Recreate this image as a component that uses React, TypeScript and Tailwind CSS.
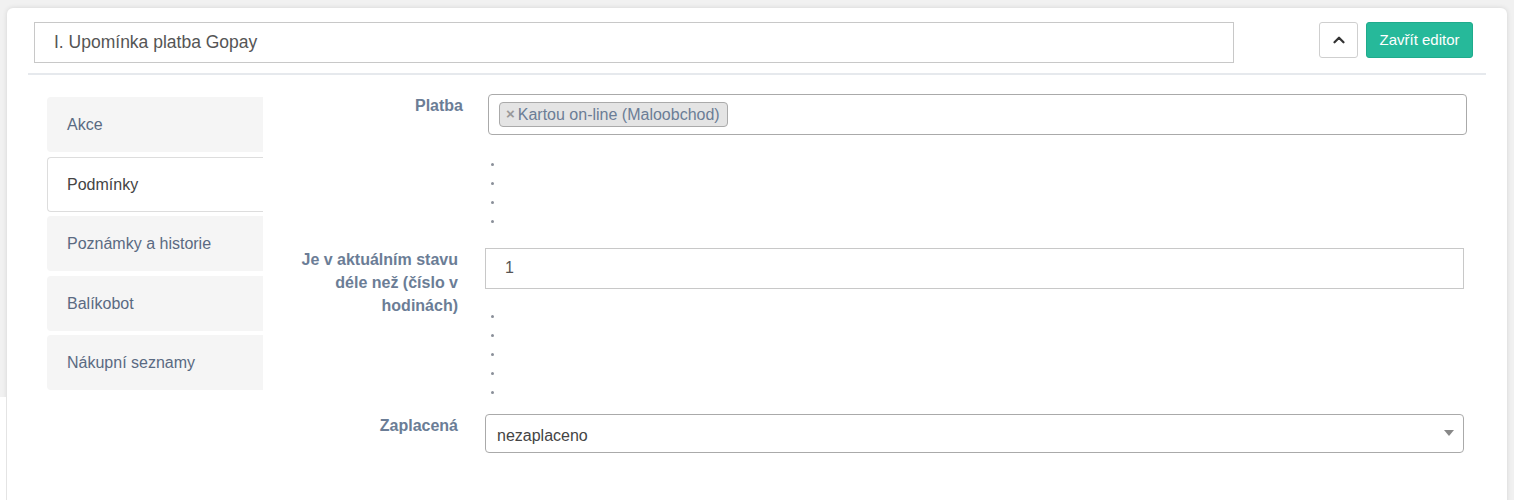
import React from "react";
import { ChevronUp } from "lucide-react";

const font = { fontFamily: '"Liberation Sans", Arial, sans-serif' };

function Dots({ n }: { n: number }) {
  return (
    <div className="flex flex-col">
      {Array.from({ length: n }).map((_, i) => (
        <div key={i} className="h-[19px] flex items-center">
          <span className="block w-[3px] h-[3px] rounded-full bg-[#8a8f99]" />
        </div>
      ))}
    </div>
  );
}

export default function App() {
  const tabs = ["Akce", "Podmínky", "Poznámky a historie", "Balíkobot", "Nákupní seznamy"];
  return (
    <div className="relative bg-[#f1f1f1] min-h-[500px] h-[500px] overflow-hidden pt-[8px] px-[7px]" style={font}>
      <div className="absolute left-0 top-[397px] w-[6px] h-[103px] bg-white" />
      <div className="bg-white rounded-[6px] shadow-[0_0_5px_rgba(0,0,0,0.12)] h-[520px]">
        {/* header */}
        <div className="flex items-start pt-[14px] pl-[27px] pr-[34px]">
          <div className="w-[1200px] h-[41px] border border-[#c8c8c8] flex items-center pl-[19px] text-[17.5px] text-[#555]">
            I. Upomínka platba Gopay
          </div>
          <div className="flex-1" />
          <button className="w-[39px] h-[36px] border border-[#cfcfcf] rounded-[3px] bg-white flex items-center justify-center text-[#333]">
            <ChevronUp size={18} strokeWidth={3} />
          </button>
          <button className="ml-[8px] w-[107px] h-[36px] rounded-[3px] bg-[#26b99a] border border-[#1fab8c] text-white text-[15px] flex items-center justify-center">
            Zavřít editor
          </button>
        </div>
        <div className="mx-[21px] mt-[10px] h-[2px] bg-[#e6e9ed]" />
        {/* body */}
        <div className="flex pl-[40px] pt-[22px]">
          <div className="w-[216px] flex flex-col gap-[4.5px]">
            {tabs.map((t) => {
              const active = t === "Podmínky";
              return (
                <div
                  key={t}
                  className={
                    active
                      ? "h-[55px] flex items-center pl-[19px] pt-[1px] text-[16px] text-[#444] bg-white border border-r-0 border-[#dddddd] rounded-l-[4px]"
                      : "h-[55px] flex items-center pl-[20px] pt-[1px] text-[16px] text-[#5a6a82] bg-[#f5f5f5] rounded-l-[4px]"
                  }
                >
                  {t}
                </div>
              );
            })}
          </div>
          <div className="flex flex-col -mt-[3px]">
            {/* row 1 */}
            <div className="flex">
              <div className="w-[200px] text-right font-bold text-[16px] leading-[23px] text-[#6b7d96]">Platba</div>
              <div className="ml-[25px] flex flex-col">
                <div className="w-[979px] h-[41px] border border-[#aaa] rounded-[4px] flex items-center pl-[10px]">
                  <span className="h-[25px] border border-[#aaa] bg-[#e4e4e4] rounded-[4px] flex items-center pl-[6px] pr-[7px] text-[16px] text-[#6b7d96]">
                    <span className="text-[#999] font-bold text-[15px] mr-[3px]">×</span>
                    Kartou on-line (Maloobchod)
                  </span>
                </div>
                <div className="mt-[20px] ml-[3px]">
                  <Dots n={4} />
                </div>
              </div>
            </div>
            {/* row 2 */}
            <div className="flex mt-[16.5px]">
              <div className="w-[195px] text-right font-bold text-[16px] leading-[23px] text-[#6b7d96]">
                Je v aktuálním stavu
                <br />
                déle než (číslo v
                <br />
                hodinách)
              </div>
              <div className="ml-[27px] flex flex-col">
                <div className="w-[979px] h-[41px] border border-[#c8c8c8] flex items-center pl-[19px] text-[16px] text-[#555]">
                  1
                </div>
                <div className="mt-[18.5px] ml-[6px]">
                  <Dots n={5} />
                </div>
              </div>
            </div>
            {/* row 3 */}
            <div className="flex mt-[11.5px]">
              <div className="w-[195px] text-right font-bold text-[16px] leading-[23px] text-[#6b7d96]">Zaplacená</div>
              <div className="ml-[27px]">
                <div className="relative w-[979px] h-[39px] border border-[#aaa] rounded-[4px] flex items-center pl-[11px] pt-[5px] text-[16px] text-[#444]">
                  nezaplaceno
                  <span className="absolute right-[9px] top-[15px] w-0 h-0 border-l-[5px] border-r-[5px] border-t-[6px] border-l-transparent border-r-transparent border-t-[#888]" />
                </div>
              </div>
            </div>
          </div>
        </div>
      </div>
    </div>
  );
}
